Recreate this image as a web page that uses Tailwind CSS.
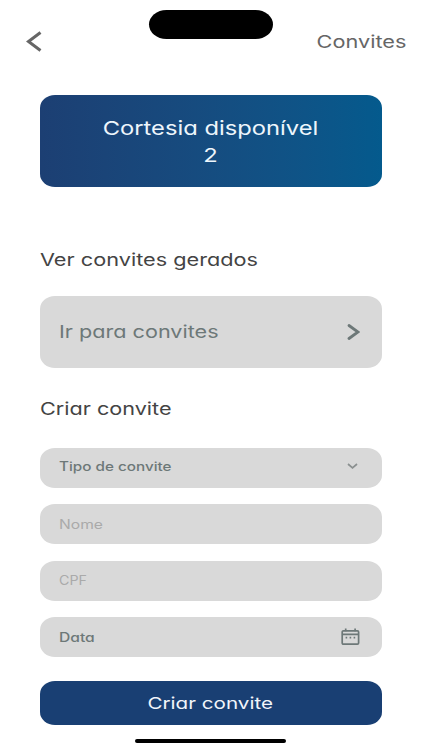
<!DOCTYPE html>
<html lang="pt-BR">
<head>
  <meta charset="UTF-8" />
  <meta name="viewport" content="width=device-width, initial-scale=1.0"/>
  <title>Convites</title>
  <script src="https://cdn.jsdelivr.net/npm/@tailwindcss/browser@4"></script>
</head>
<body class="bg-white h-[750px] overflow-hidden font-['Inter',sans-serif] [font-feature-settings:'cv11']">
  <!-- Dynamic island -->
  <div class="absolute left-[149px] top-[9.5px] w-[124px] h-[29.5px] rounded-[18px/15px] bg-black"></div>

  <header class="h-[95px] pt-[30px] pl-[26px] pr-4 flex items-start justify-between">
    <button aria-label="Voltar">
      <svg class="w-4 h-6" viewBox="0 0 16 24" fill="none" stroke="#666666" stroke-width="3"><path d="M14.5 2.5L2.5 11.5L14.5 20.5"/></svg>
    </button>
    <h1 class="text-[17.5px] leading-6 text-[#666666] origin-right scale-x-[1.24]">Convites</h1>
  </header>

  <main class="ml-10 w-[342px]">
    <section class="h-[92px] pt-5 rounded-[15px/13px] bg-linear-to-r from-[#1c3f73] to-[#045a8d] text-[#eef6fc] text-[19px] leading-[27px] text-center">
      <p class="-ml-px scale-x-[1.25]">Cortesia disponível</p>
      <p class="-ml-px scale-x-[1.25]">2</p>
    </section>

    <h2 class="mt-[61px] w-fit text-[17.5px] leading-6 text-[#444444] origin-left scale-x-[1.24]">Ver convites gerados</h2>

    <button class="mt-6 w-full h-[72px] pl-[19px] pr-5 rounded-[15px/13px] bg-[#d9d9d9] text-[#6d7878] flex items-center justify-between">
      <span class="pt-px text-[17.5px] origin-left scale-x-[1.235]">Ir para convites</span>
      <svg class="w-4 h-5 mr-0.5" viewBox="0 0 16 20" fill="none" stroke="currentColor" stroke-width="2.8" stroke-linecap="round"><path d="M5 3.5L14 10L5 16.5"/></svg>
    </button>

    <h2 class="mt-[29px] w-fit text-[17.5px] leading-6 text-[#444444] origin-left scale-x-[1.235]">Criar convite</h2>

    <form class="mt-[27.2px] flex flex-col gap-[16.3px] text-[12.5px]">
      <div class="h-10 pl-[19px] pr-6 pb-[3px] rounded-[15px/13px] bg-[#d9d9d9] text-[#6d7878] font-medium flex items-center justify-between">
        <span class="pt-px origin-left scale-x-[1.22]">Tipo de convite</span>
        <svg class="w-[11px] h-2" viewBox="0 0 11 8" fill="none" stroke="#8b9090" stroke-width="1.7"><path d="M1 1L5.5 4.8L10 1"/></svg>
      </div>
      <div class="h-10 px-[19px] pt-px rounded-[15px/13px] bg-[#d9d9d9] text-[#aaaaaa] flex items-center">
        <span class="origin-left scale-x-[1.25]">Nome</span>
      </div>
      <div class="h-10 px-[19px] pt-0.5 rounded-[15px/13px] bg-[#d9d9d9] text-[#aaaaaa] flex items-center">
        <span class="origin-left scale-x-[1.14]">CPF</span>
      </div>
      <div class="h-10 pl-[19px] pr-[22px] rounded-[15px/13px] bg-[#d9d9d9] text-[#6d7878] font-medium flex items-center justify-between">
        <span class="pt-0.5 origin-left scale-x-[1.25]">Data</span>
        <svg class="w-[19px] h-[18px]" viewBox="0 0 19 18" fill="none" stroke="currentColor" stroke-width="1.7">
          <rect x="1.2" y="2.8" width="16.4" height="13.4" rx="1.2"/>
          <path d="M1.2 6.3H17.6M4.7 .6V3.2M14.1 .6V3.2"/>
          <path d="M4.6 9.6H6.2M8.6 9.6H10.2M12.6 9.6H14.2"/>
        </svg>
      </div>
      <button type="button" class="mt-2 h-11 rounded-[15px/13px] bg-[#193f73] text-[#f1f5fa] text-[16.5px]">
        <span class="inline-block -ml-0.5 scale-x-[1.25]">Criar convite</span>
      </button>
    </form>
  </main>

  <!-- Home indicator -->
  <div class="absolute left-[135px] top-[739px] w-[151px] h-1 rounded-full bg-black"></div>
</body>
</html>
